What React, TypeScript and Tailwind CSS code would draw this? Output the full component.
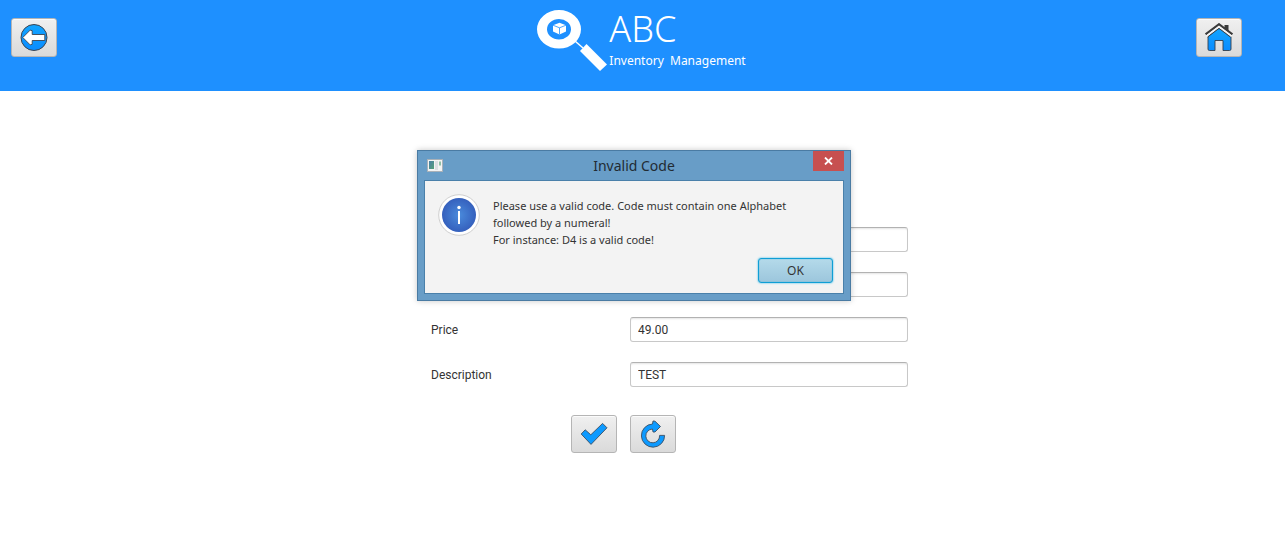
import React from "react";

const toolButton =
  "flex items-center justify-center w-[46px] rounded-[3px] border border-[#b5b5b5] bg-linear-to-b from-[#f0f0f0] to-[#dadada] shadow-[inset_0_1px_0_#fbfbfb]";

const fieldInput =
  "h-[25px] w-full rounded-[3px] border border-[#c8c8c8] border-t-[#b2b2b2] bg-white px-[7px] text-[12px] text-[#333] shadow-[inset_0_2px_2px_-1px_#e4e4e4] outline-none";

const blueStops = (
  <>
    <stop offset="0" stopColor="#12a5ff" />
    <stop offset="1" stopColor="#0a8cff" />
  </>
);

function BackIcon() {
  return (
    <svg width="28" height="28" viewBox="0 0 28 28" aria-hidden="true">
      <defs>
        <linearGradient id="back-fill" x1="0" y1="0" x2="0" y2="1">{blueStops}</linearGradient>
      </defs>
      <circle cx="14" cy="13.5" r="13" fill="url(#back-fill)" stroke="#3c4450" strokeWidth="1" />
      <path
        d="M2.8 13.5 L10.2 6.1 L12.2 6.7 V10.5 H24.8 V16.5 H12.2 V20.3 L10.2 20.9 Z"
        fill="#fff"
        stroke="#3c4450"
        strokeWidth="0.9"
        strokeLinejoin="round"
      />
    </svg>
  );
}

function HomeIcon() {
  return (
    <svg width="30" height="30" viewBox="0 0 30 30" aria-hidden="true">
      <defs>
        <linearGradient id="home-fill" x1="0" y1="0" x2="0" y2="1">{blueStops}</linearGradient>
      </defs>
      <path d="M20.5 2 H24.5 V8.5 L20.5 5 Z" fill="#3a3a3a" />
      <path
        d="M4 13.5 L13 6.2 Q15 4.8 17 6.2 L27 13.5 V26 Q27 27.5 25.5 27.5 H19 V17.5 H11 V27.5 H5.5 Q4 27.5 4 26 Z"
        fill="url(#home-fill)"
        stroke="#333f4c"
        strokeWidth="0.9"
      />
      <path d="M1.6 11.4 L15 1.4 L28.4 11.4" fill="none" stroke="#3a3a3a" strokeWidth="2.4" />
      <path d="M2.4 13.2 L15 3.8 L27.6 13.2" fill="none" stroke="#f4f4f4" strokeWidth="2" />
      <path d="M3.6 14 L15 5.4 L26.4 14" fill="none" stroke="#3a3a3a" strokeWidth="0.9" />
    </svg>
  );
}

function CheckIcon() {
  return (
    <svg width="28" height="24" viewBox="0 0 28 24" aria-hidden="true">
      <path
        d="M1.2 12 L5.2 7.8 L10.8 12.8 L22.6 1.4 L27 5.8 L11 22.4 Z"
        fill="#0d9aff"
        stroke="#3c4f63"
        strokeWidth="0.9"
        strokeLinejoin="round"
      />
    </svg>
  );
}

function ResetIcon() {
  return (
    <svg width="26" height="28" viewBox="0 0 26 28" aria-hidden="true">
      <path
        d="M12.5 4 L13 1 L15 1.2 L20.5 6.5 L15 12 L13 12 L12.5 9 A6.9 6.9 0 1 0 19.6 15.4 H24.6 A11.6 11.6 0 1 1 12.5 4 Z"
        fill="#0d9aff"
        stroke="#3c4f63"
        strokeWidth="0.9"
        strokeLinejoin="round"
      />
    </svg>
  );
}

function LogoMark() {
  return (
    <svg width="72" height="62" viewBox="0 0 72 62" aria-hidden="true">
      <path
        fillRule="evenodd"
        fill="#fff"
        d="M0 19.3 A22 19.3 0 1 1 44 19.3 A22 19.3 0 1 1 0 19.3 Z M10 19.3 A12 10.3 0 1 0 34 19.3 A12 10.3 0 1 0 10 19.3 Z"
      />
      <path d="M38 31 L46 38" stroke="#fff" strokeWidth="1.5" />
      <path d="M49.5 34 L70 54.5 L63 61 L43 41 Z" fill="#fff" />
      <path d="M22.5 12.8 L29 15.2 V21.5 L22.5 24.5 L16 21.5 V15.2 Z" fill="#fff" />
      <path d="M16 15.2 L22.5 17.8 L29 15.2 M22.5 17.8 V24.5" fill="none" stroke="#1e90ff" strokeWidth="0.8" />
    </svg>
  );
}

function InfoIcon() {
  return (
    <svg className="shrink-0" width="42" height="42" viewBox="0 0 42 42" aria-hidden="true">
      <defs>
        <radialGradient id="info-fill">
          <stop offset="0" stopColor="#4a8bdc" />
          <stop offset="1" stopColor="#3560bd" />
        </radialGradient>
      </defs>
      <circle cx="21" cy="21" r="20.3" fill="#fff" stroke="#cfcfcf" strokeWidth="1" />
      <circle cx="21" cy="21" r="17" fill="url(#info-fill)" />
      <rect x="20" y="17" width="2" height="13" fill="#fff" />
      <circle cx="21" cy="13.5" r="1.7" fill="#fff" />
    </svg>
  );
}

function WindowIcon() {
  return (
    <svg width="16" height="13" viewBox="0 0 16 13" aria-hidden="true">
      <defs>
        <linearGradient id="window-fill" x1="0" y1="0" x2="1" y2="1">
          <stop offset="0" stopColor="#4a7fa8" />
          <stop offset="1" stopColor="#55a077" />
        </linearGradient>
      </defs>
      <rect x="0.5" y="0.5" width="15" height="12" fill="#f3f3f3" stroke="#a9b1b8" />
      <rect x="2" y="2" width="5" height="8" fill="url(#window-fill)" />
      <rect x="8" y="2" width="3" height="9" fill="#dcdfe2" />
      <rect x="12" y="2.5" width="2" height="4" fill="#8fc0a8" />
    </svg>
  );
}

function Dialog() {
  return (
    <div
      role="dialog"
      aria-labelledby="dialog-title"
      className="absolute -left-[14px] -top-[77px] w-[434px] border border-[#4a7ba3] bg-[#689dc7] px-[6px] pb-[6px] font-['Noto_Sans',sans-serif] text-[#333] shadow-[0_0_6px_rgba(0,0,0,0.22)]"
    >
      <div className="grid h-[29px] grid-cols-[1fr_auto_1fr] items-center">
        <div className="pl-[3px]">
          <WindowIcon />
        </div>
        <h2 id="dialog-title" className="text-[14px] leading-[20px] text-[#222b33]">
          Invalid Code
        </h2>
        <button
          type="button"
          aria-label="Close"
          className="flex h-[20px] w-[31px] items-center justify-center self-start justify-self-end bg-[#c75050]"
        >
          <svg width="9" height="8" viewBox="0 0 9 8" aria-hidden="true">
            <path d="M1 0.5 L8 7.5 M8 0.5 L1 7.5" stroke="#fff" strokeWidth="1.8" />
          </svg>
        </button>
      </div>
      <div className="border border-[#4a80aa] bg-[#f3f3f3] px-[10px] pb-[10px] pt-[13px]">
        <div className="flex gap-[13px] pl-[3px]">
          <InfoIcon />
          <p className="pt-[3px] text-[11px] leading-[17px]">
            Please use a valid code. Code must contain one Alphabet
            <br />
            followed by a numeral!
            <br />
            For instance: D4 is a valid code!
          </p>
        </div>
        <div className="flex justify-end pt-[10px]">
          <button
            type="button"
            className="h-[25px] w-[75px] rounded-[3px] border border-[#0f9ed5] bg-linear-to-b from-[#b4daea] to-[#9cc6dc] text-[12px] leading-[20px] shadow-[0_0_2px_#1fb4e8,inset_0_0_1px_#0f9ed5]"
          >
            OK
          </button>
        </div>
      </div>
    </div>
  );
}

function Field({ id, label, value, covered }: { id: string; label: string; value: string; covered?: boolean }) {
  return (
    <div className="grid grid-cols-[199px_278px] items-center">
      {covered ? <span /> : <label htmlFor={id}>{label}</label>}
      <input id={id} aria-label={covered ? label : undefined} defaultValue={value} className={fieldInput} />
    </div>
  );
}

export default function App() {
  return (
    <div className="min-h-screen bg-white font-[Roboto,sans-serif] text-[12px] text-[#333]">
      <header className="flex h-[91px] items-start justify-between bg-[#1e90ff] pl-[11px] pr-[43px]">
        <button type="button" aria-label="Back" className={`${toolButton} mt-[18px] h-[39px]`}>
          <BackIcon />
        </button>
        <div className="flex pl-[30px] pt-[10px] font-['Noto_Sans',sans-serif] text-white">
          <LogoMark />
          <div>
            <h1 className="text-[36px] font-light leading-[38px]">ABC</h1>
            <p className="whitespace-pre text-[12px] leading-[26px]">Inventory  Management</p>
          </div>
        </div>
        <button type="button" aria-label="Home" className={`${toolButton} mt-[18px] h-[39px]`}>
          <HomeIcon />
        </button>
      </header>
      <main className="flex justify-center pl-[54px] pt-[136px]">
        <form className="relative" onSubmit={(e) => e.preventDefault()}>
          <div className="flex flex-col gap-[20px]">
            <Field id="code" label="Code" value="" covered />
            <Field id="name" label="Name" value="" covered />
            <Field id="price" label="Price" value="49.00" />
            <Field id="description" label="Description" value="TEST" />
          </div>
          <div className="flex gap-[13px] pl-[140px] pt-[28px]">
            <button type="submit" aria-label="Save" className={`${toolButton} h-[38px]`}>
              <CheckIcon />
            </button>
            <button type="reset" aria-label="Reset" className={`${toolButton} h-[38px]`}>
              <ResetIcon />
            </button>
          </div>
          <Dialog />
        </form>
      </main>
    </div>
  );
}
